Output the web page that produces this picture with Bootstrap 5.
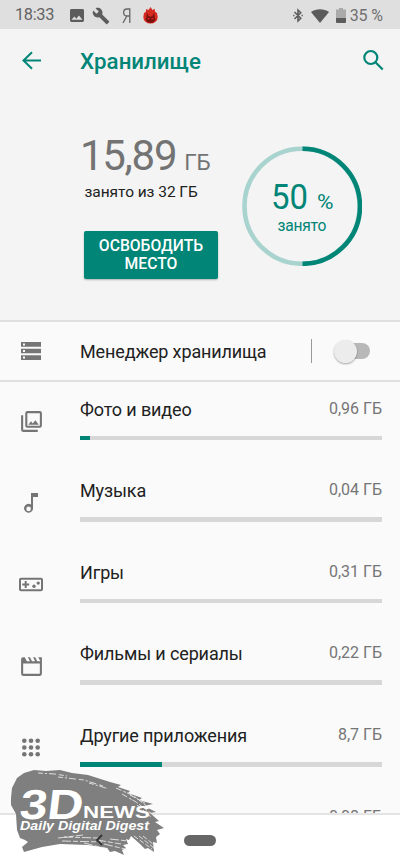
<!DOCTYPE html>
<html lang="ru">
<head>
<meta charset="utf-8">
<meta name="viewport" content="width=device-width, initial-scale=1">
<title>Хранилище</title>
<link rel="stylesheet" href="https://cdn.jsdelivr.net/npm/bootstrap@5.3.0/dist/css/bootstrap.min.css">
<style>
:root{--teal:#008577}
body{font-family:Roboto,"Noto Sans",sans-serif;background:#fafafa;color:#212121;line-height:1}
.phone{width:400px;height:867px}
.statusbar{height:29px;background:#dfdfdf;color:#707070;padding:2px 17px 0 15px;flex:none}
.clock{color:#636363;width:55px;font-size:16.4px;letter-spacing:-.35px}
.battery-level{margin-left:4px;font-size:16px;letter-spacing:-.1px}
.summary{height:293px;background:#f4f4f4;border-bottom:2px solid #e0e0e0;flex:none}
.titlebar{height:64px;padding:0 14px 0 20px}
.titlebar h1{font-size:22.3px;font-weight:500;color:var(--teal);padding-left:36px}
.used{padding:42px 0 0 80px;width:242px}
.amount{font-size:42px;height:42px;color:#737373;white-space:nowrap;letter-spacing:-1.3px}
.amount small{font-size:22.5px;letter-spacing:-.4px;margin-left:-1px}
.subline{font-size:15.5px;padding:8px 0 0 4.500px;letter-spacing:-.05px}
.free{background:var(--teal);color:#fff;width:134px;height:48px;margin:30.500px 0 0 4px;border-radius:2px;font-size:15.7px;font-weight:500;line-height:18.5px;box-shadow:0 1px 2px #0004;border:0}
.ring{width:120px;height:120px;margin-top:53px}
.ring svg{display:block}
.manager{height:60px;border-bottom:2px solid #e0e0e0;flex:none}
.manager .label{padding-top:2px}
.gutter{width:80px;padding-left:19px;flex:none}
.label{font-size:18px;letter-spacing:-.13px;white-space:nowrap}
.divider{width:1px;height:24px;background:#999}
.switch-track{width:34px;height:16px;border-radius:8px;background:#b8b8b8;margin:0 30px 0 24px}
.switch-knob{width:23px;height:23px;border-radius:50%;background:#ececec;box-shadow:0 1px 2px #0005;margin:-3.5px 0 0 -2.5px}
.list{flex:1;min-height:0}
.entry{height:81.6px;padding-right:18px;flex:none}
.entry .gutter{padding-top:27px}
.entry .line{height:53.7px;padding-top:18.6px}
.value{font-size:16px;color:#757575}
.meter{height:4.6px;background:#d7d7d7;border-radius:0}
.meter .progress-bar{background:var(--teal)}
.navkeys{height:54px;background:#fff;border-top:2px solid #e4e4e4;padding-bottom:2px;flex:none}
.pill{width:32px;height:11px;border-radius:6px;background:#666}
.stamp{left:0;top:760px}
.ic{fill:#757575;display:block}
</style>
</head>
<body>
<div class="phone position-relative d-flex flex-column overflow-hidden">
  <header class="statusbar d-flex align-items-center">
    <span class="clock">18:33</span>
    <svg width="14" height="13" viewBox="3 3 18 18" preserveAspectRatio="none" fill="#5c5c5c"><path d="M21 19V5a2 2 0 0 0-2-2H5a2 2 0 0 0-2 2v14a2 2 0 0 0 2 2h14a2 2 0 0 0 2-2zM8.500 13.500l2.500 3 3.500-4.500 4.500 6H5z"/></svg>
    <svg class="ms-2" width="18" height="18" viewBox="0 0 24 24" fill="#5c5c5c"><path d="M22.700 19l-9.100-9.100c.9-2.300.4-5-1.500-6.900-2-2-5-2.400-7.400-1.300L9 6 6 9 1.600 4.700C.4 7.100.9 10.100 2.900 12.100c1.900 1.900 4.600 2.400 6.900 1.500l9.100 9.100c.4.4 1 .4 1.400 0l2.300-2.300c.5-.4.5-1.100.1-1.400z"/></svg>
    <svg width="9" height="15" viewBox="0 0 9 15" fill="none" stroke="#666" stroke-width="1.300" style="margin-left:12px"><path d="M7.800 15V1H5C2.500 1 1.600 2.700 1.600 4.600 1.600 6.800 3 8 5 8h2.800M4.800 8L1 15"/></svg>
    <svg width="15" height="17" viewBox="0 0 15 17" style="margin-left:12px"><path fill="#d52b20" d="M7.500 0l2 3 2-1.200.6 3L14 6l.7 4A7.200 6.600 0 0 1 .3 10L1 6l1.700-1L3.200 2l2.300 1z"/><path fill="#7a100e" d="M3.800 5.500l2 4h3.400l2-4 .3 4.500 1 2.500-1.800 2.500-3.200 1-3.200-1-1.800-2.500 1-2.500z"/><path fill="#d52b20" d="M4.500 11h2v1.300h-2zM8.500 11h2v1.300h-2z"/></svg>
    <svg class="ms-auto" width="10" height="15" viewBox="0 0 10 15" fill="none" stroke="#5c5c5c" stroke-width="1.500"><path d="M1.500 4l6.300 6.200L5 13V2l2.800 2.800L1.500 11M.2 7.500h1.300M8.500 7.500h1.300"/></svg>
    <svg width="18" height="14" viewBox="0 0 18 14" fill="#5c5c5c" style="margin-left:8px"><path d="M9 14L0 3C5-.8 13-.8 18 3z"/></svg>
    <svg width="10" height="15" viewBox="0 0 10 15" style="margin-left:7px"><path fill="#aaa" d="M3 0h4v1.500h3V10H0V1.500h3z"/><path fill="#5c5c5c" d="M0 10h10v4q0 1-1 1H1q-1 0-1-1z"/></svg>
    <span class="battery-level">35 %</span>
  </header>

  <section class="summary">
    <div class="titlebar d-flex align-items-center">
      <svg width="24" height="24" viewBox="0 0 24 24" fill="none" stroke="#008577" stroke-width="2"><path d="M21 11.500H4M12 3.200L3.500 11.500l8.500 8.300"/></svg>
      <h1 class="mb-0">Хранилище</h1>
      <svg class="ms-auto" width="26" height="26" viewBox="0 0 26 26" fill="none" stroke="#008577" stroke-width="2.200"><circle cx="10.800" cy="9.500" r="6.500"/><path d="M15.200 14l7.500 7.500"/></svg>
    </div>
    <div class="d-flex">
      <div class="used">
        <div class="amount">15,89 <small>ГБ</small></div>
        <div class="subline">занято из 32 ГБ</div>
        <button class="free d-block p-0 text-center" type="button">ОСВОБОДИТЬ<br>МЕСТО</button>
      </div>
      <div class="ring">
        <svg width="120" height="120" viewBox="0 0 120 120" fill="none" stroke-width="4.500">
          <circle cx="60" cy="60.300" r="57.500" stroke="#a9d3cf"/><path d="M60.500 2.800a57.500 57.500 0 0 1 0 115" stroke="#008577"/>
          <g fill="#008577" stroke="none"><text x="29" y="63" font-size="34.500" textLength="37" lengthAdjust="spacingAndGlyphs">50</text><text x="75" y="62.500" font-size="20.500" textLength="16.500" lengthAdjust="spacingAndGlyphs">%</text><text x="35.500" y="85" font-size="15.600" textLength="49">занято</text></g>
        </svg>
      </div>
    </div>
  </section>

  <section class="manager d-flex align-items-center">
    <div class="gutter"><svg class="ic" width="24" height="24" viewBox="0 0 24 24"><path fill-rule="evenodd" d="M2 21h20v-4.700H2zm2-3.400h2v2H4zM2 3v4.700h20V3zm4 3.400H4v-2h2zM2 14.300h20V9.700H2zm2-3.300h2v2H4z"/></svg></div>
    <span class="label">Менеджер хранилища</span>
    <div class="divider ms-auto"></div>
    <div class="switch-track"><div class="switch-knob"></div></div>
  </section>

  <main class="list overflow-hidden d-flex flex-column">
    <div class="entry d-flex">
      <div class="gutter"><svg class="ic" width="25" height="25" viewBox="0 0 24 24"><path d="M20 4v12H8V4zm0-2H8a2 2 0 0 0-2 2v12a2 2 0 0 0 2 2h12a2 2 0 0 0 2-2V4a2 2 0 0 0-2-2zm-8.500 9.700l1.700 2.300 2.500-3.100L19 15H9zM2 6v14a2 2 0 0 0 2 2h14v-2H4V6z"/></svg></div>
      <div class="flex-grow-1"><div class="line d-flex justify-content-between"><span class="label">Фото и видео</span><span class="value">0,96 ГБ</span></div><div class="progress meter"><div class="progress-bar" style="width:3.2%"></div></div></div>
    </div>
    <div class="entry d-flex">
      <div class="gutter"><svg class="ic" width="24" height="24" viewBox="0 0 24 24"><path d="M12 2v11.500A4.500 4.500 0 1 0 14 18V6h5V2zM9.600 20.200a2.300 2.300 0 1 1 0-4.600 2.300 2.300 0 0 1 0 4.600z"/></svg></div>
      <div class="flex-grow-1"><div class="line d-flex justify-content-between"><span class="label">Музыка</span><span class="value">0,04 ГБ</span></div><div class="progress meter"></div></div>
    </div>
    <div class="entry d-flex">
      <div class="gutter"><svg class="ic" width="25" height="25" viewBox="0 0 25 25"><rect x="1" y="6.800" width="22" height="11.500" rx="1" fill="none" stroke="#757575" stroke-width="2"/><path d="M5.700 9.100h2v2.500h2.500v2H7.700v2.500h-2v-2.500H3.200v-2h2.500z"/><circle cx="15" cy="14.300" r="1.700"/><circle cx="19.200" cy="11.100" r="1.700"/></svg></div>
      <div class="flex-grow-1"><div class="line d-flex justify-content-between"><span class="label">Игры</span><span class="value">0,31 ГБ</span></div><div class="progress meter"></div></div>
    </div>
    <div class="entry d-flex">
      <div class="gutter"><svg class="ic" width="25" height="25" viewBox="0 0 24 24"><path d="M18.500 3l2 4h-3l-2-4h-2l2 4h-3l-2-4h-2l2 4h-3l-2-4H4a2 2 0 0 0-2 2v14a2 2 0 0 0 2 2h16a2 2 0 0 0 2-2V3zm1.500 16H4V9h16z"/></svg></div>
      <div class="flex-grow-1"><div class="line d-flex justify-content-between"><span class="label">Фильмы и сериалы</span><span class="value">0,22 ГБ</span></div><div class="progress meter"></div></div>
    </div>
    <div class="entry d-flex">
      <div class="gutter"><svg class="ic" width="24" height="24" viewBox="0 0 24 24"><circle cx="5.300" cy="5.800" r="2.300"/><circle cx="12" cy="5.800" r="2.300"/><circle cx="18.700" cy="5.800" r="2.300"/><circle cx="5.300" cy="12.500" r="2.300"/><circle cx="12" cy="12.500" r="2.300"/><circle cx="18.700" cy="12.500" r="2.300"/><circle cx="5.300" cy="19.200" r="2.300"/><circle cx="12" cy="19.200" r="2.300"/><circle cx="18.700" cy="19.200" r="2.300"/></svg></div>
      <div class="flex-grow-1"><div class="line d-flex justify-content-between"><span class="label">Другие приложения</span><span class="value">8,7 ГБ</span></div><div class="progress meter"><div class="progress-bar" style="width:27.1%"></div></div></div>
    </div>
    <div class="entry d-flex">
      <div class="gutter"></div>
      <div class="flex-grow-1"><div class="line d-flex justify-content-end"><span class="value">0,08 ГБ</span></div></div>
    </div>
  </main>
  <nav class="navkeys d-flex justify-content-center align-items-center"><div class="pill"></div></nav>

  <svg class="stamp position-absolute" width="170" height="107" viewBox="0 0 170 107">
    <path fill="#7f7f7f" d="M24 13L34 10 46 11 60 10 72 13 88 15 110 22 121 25 118 27 130 31 128 33 142 38 139 40 153 44 144 46 156 52 150 53 159 61 155 62 164 68 157 70 160 74 156 77 157 83 153 82 154 92 148 88 145 89 140 84 131 76 129 80 126 79 128 84 123 85 126 88 122 90 124 95 115 91 110 92 107 88 88 85 60 84 42 87 24 92 22 87 28 82 25 80 20 78 17 70 16 54 11 45 11 38 12 28 17 18z"/>
    <g fill="none" stroke="#f4f4f4" stroke-width=".8">
      <path d="M38 13l17 1 12 2M58 17l26 3 19 6M89 23l20 6" stroke-dasharray="5 2 2 2 7 3"/>
      <path d="M116 28l18 8 15 12M122 34l14 8 16 12M130 35l15 8M137 45l14 12" stroke-dasharray="6 2 3 1"/>
      <path d="M58 78l25-3M64 77l34 1M62 81l40 1M97 80l24 4M104 84l21 5M84 83l24 6M110 79l18 2" stroke-dasharray="9 2 5 2"/>
      <path d="M134 76l18 13M139 76l15 12M143 76l10 8" stroke-dasharray="5 2"/>
    </g>
    <g fill="#fff">
      <text transform="translate(18.500 58.500) skewX(-7) scale(1.440 1)" font-family="Liberation Sans" font-weight="700" font-size="42" textLength="44" lengthAdjust="spacingAndGlyphs">3D</text>
      <text x="83" y="58" font-family="Liberation Sans" font-weight="700" font-size="17" textLength="67" lengthAdjust="spacingAndGlyphs">NEWS</text>
      <text x="20" y="69.500" font-family="Liberation Sans" font-weight="700" font-style="italic" font-size="12" textLength="129" lengthAdjust="spacingAndGlyphs">Daily Digital Digest</text>
    </g>
    <path d="M102 75l-5 5 5 5" fill="none" stroke="#333" stroke-width="1.800"/>
  </svg>
</div>
<script src="https://cdn.jsdelivr.net/npm/bootstrap@5.3.0/dist/js/bootstrap.bundle.min.js"></script>
</body>
</html>
